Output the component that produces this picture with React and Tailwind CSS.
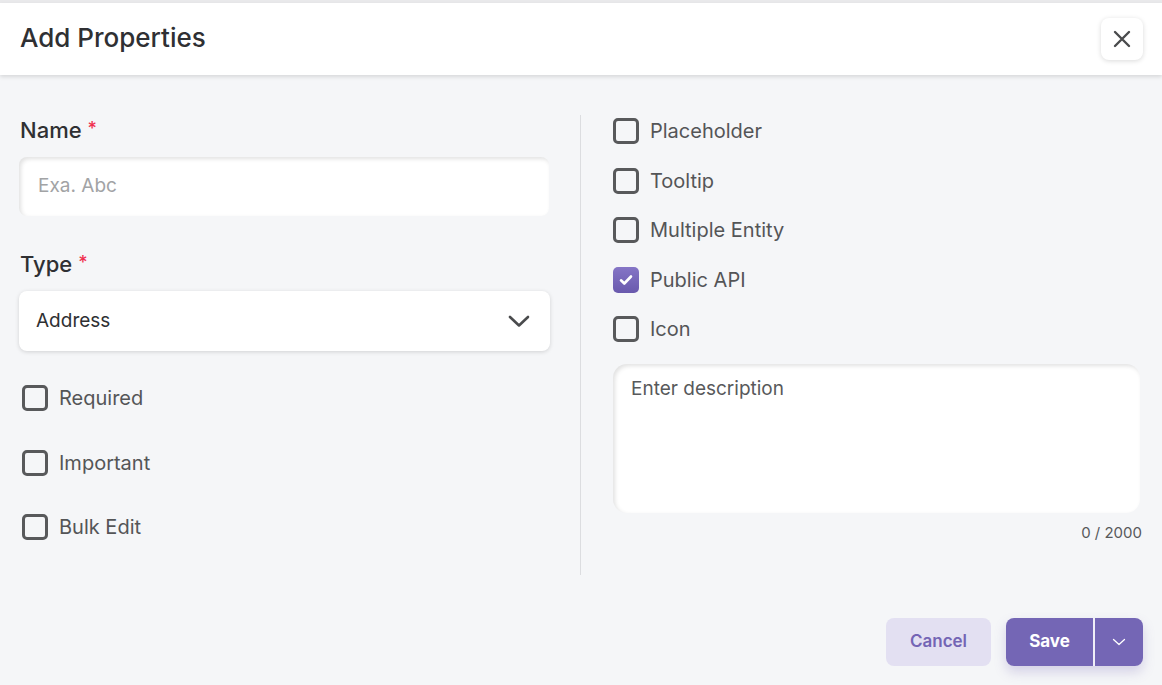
import React from "react";

const font = { fontFamily: "Inter, 'Noto Sans', sans-serif" };

function Box({ checked }) {
  if (checked) {
    return (
      <span className="flex h-[26px] w-[26px] shrink-0 items-center justify-center rounded-[5px] bg-gradient-to-b from-[#8575c6] to-[#6959ad]">
        <svg width="18" height="18" viewBox="0 0 18 18" fill="none">
          <path d="M4 9.3l3.3 3.2 6.7-7" stroke="white" strokeWidth="2.6" strokeLinecap="round" strokeLinejoin="round" />
        </svg>
      </span>
    );
  }
  return <span className="block h-[26px] w-[26px] shrink-0 rounded-[5px] border-[3px] border-[#58595b]" />;
}

function Check({ label, checked }) {
  return (
    <label className="flex items-center gap-[11px]">
      <Box checked={checked} />
      <span className="text-[20px] leading-none text-[#545557]">{label}</span>
    </label>
  );
}

export default function App() {
  return (
    <div style={font} className="flex h-[685px] w-full flex-col bg-[#f5f6f8]">
      <div className="h-[3px] bg-[#e9e9eb]" />
      <header className="relative z-10 flex h-[72px] items-center justify-between bg-white pl-5 pr-[19px] shadow-[0_2px_4px_rgba(0,0,0,0.12)]">
        <h1 className="pb-[4px] text-[26px] font-medium text-[#2f3033]">Add Properties</h1>
        <button className="flex h-[42px] w-[42px] items-center justify-center rounded-lg bg-white shadow-[0_1px_5px_rgba(0,0,0,0.15)]">
          <svg width="22" height="22" viewBox="0 0 22 22" fill="none">
            <path d="M4 4l14 14M18 4L4 18" stroke="#4a4b4d" strokeWidth="2.4" strokeLinecap="round" />
          </svg>
        </button>
      </header>
      <div className="flex flex-1 flex-col">
        <div className="flex pl-[19px] pt-10">
          <div className="flex w-[531px] flex-col">
            <div className="flex items-start gap-[6px] pl-px text-[22px] font-medium text-[#2f3033]">
              <span className="leading-[30px]">Name</span>
              <span className="text-[18px] text-[#f0304f]">*</span>
            </div>
            <div className="mt-[12px] flex h-[59px] w-[530px] items-center rounded-lg bg-white pl-[19px] shadow-[inset_2px_2px_4px_rgba(0,0,0,0.12)]">
              <span className="text-[19px] text-[#a2a3a5]">Exa. Abc</span>
            </div>
            <div className="mt-[33px] flex items-start gap-[6px] pl-px text-[22px] font-medium text-[#2f3033]">
              <span className="leading-[30px]">Type</span>
              <span className="text-[18px] text-[#f0304f]">*</span>
            </div>
            <div className="mt-[12px] flex h-[60px] w-[531px] items-center justify-between rounded-lg bg-white pl-[17px] pr-[20px] shadow-[0_1px_4px_rgba(0,0,0,0.15)]">
              <span className="text-[19px] text-[#2f3033]">Address</span>
              <svg width="22" height="14" viewBox="0 0 22 14" fill="none">
                <path d="M2 3l9 8.5L20 3" stroke="#4a4b4d" strokeWidth="2.6" strokeLinecap="round" strokeLinejoin="round" />
              </svg>
            </div>
            <div className="mt-[34px] flex flex-col gap-[38.5px] pl-[3px]">
              <Check label="Required" />
              <Check label="Important" />
              <Check label="Bulk Edit" />
            </div>
          </div>
          <div className="ml-[30px] h-[460px] w-px bg-[#dcdde0]" />
          <div className="ml-[32px] flex w-[530px] flex-col">
            <div className="mt-[3px] flex flex-col gap-[23.5px]">
              <Check label="Placeholder" />
              <Check label="Tooltip" />
              <Check label="Multiple Entity" />
              <Check label="Public API" checked />
              <Check label="Icon" />
            </div>
            <div className="mt-[22px] h-[149px] w-[527px] rounded-[14px] bg-white px-[18px] pt-[11px] shadow-[inset_2px_2px_4px_rgba(0,0,0,0.12)]">
              <span className="text-[19px] text-[#58595b]">Enter description</span>
            </div>
            <div className="mt-[9px] w-[529px] text-right text-[15px] text-[#58595b]">0 / 2000</div>
          </div>
        </div>
        <div className="mt-auto flex justify-end gap-[15px] pb-[19px] pr-[19px]">
          <button className="h-[48px] w-[105px] rounded-lg bg-[#e3e0f2] text-[17px] font-semibold text-[#7465b5]">Cancel</button>
          <div className="flex h-[48px] overflow-hidden rounded-lg shadow-[0_6px_12px_rgba(116,101,181,0.25)]">
            <button className="w-[87px] bg-[#7466b5] text-[17px] font-bold text-white">Save</button>
            <div className="w-[2px] bg-[#f0eef8]" />
            <button className="flex w-[48px] items-center justify-center bg-[#7466b5]">
              <svg width="14" height="10" viewBox="0 0 14 10" fill="none">
                <path d="M1.5 2.5l5.5 5 5.5-5" stroke="white" strokeWidth="1.3" strokeLinecap="round" strokeLinejoin="round" />
              </svg>
            </button>
          </div>
        </div>
      </div>
    </div>
  );
}
